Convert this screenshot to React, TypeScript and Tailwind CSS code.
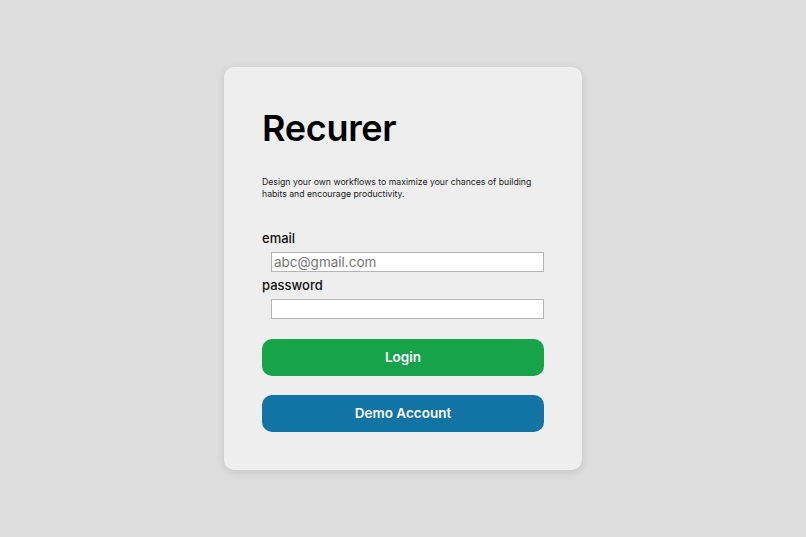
import React, { useState } from "react";

export default function App() {
  const [email, setEmail] = useState("");
  const [password, setPassword] = useState("");

  return (
    <div className="min-h-screen w-full bg-[#dedede] flex items-center justify-center font-['Inter',sans-serif]">
      {/* Login card */}
      <div className="w-[358px] h-[403px] bg-[#eeeeee] rounded-[10px] shadow-[0_2px_8px_rgba(0,0,0,0.12)] px-[38px] pt-[41px] flex flex-col">
        <h1 className="text-[36px] leading-[40px] font-semibold text-black tracking-[-0.3px]">
          Recurer
        </h1>

        <p className="mt-[28px] text-[8.7px] leading-[12px] text-[#222]">
          Design your own workflows to maximize your chances of building
          habits and encourage productivity.
        </p>

        <form className="mt-[28px] flex flex-col" onSubmit={(e) => e.preventDefault()}>
          <label className="text-[13px] leading-[20px] text-[#111] font-medium">email</label>
          <input
            type="email"
            placeholder="abc@gmail.com"
            value={email}
            onChange={(e) => setEmail(e.target.value)}
            className="mt-[4px] ml-[9px] w-[273px] h-[20px] bg-white border border-[#b5b5b5] px-[2px] text-[13.5px] leading-[18px] placeholder:text-[#777] outline-none"
          />

          <label className="mt-[3px] text-[13px] leading-[20px] text-[#111] font-medium">password</label>
          <input
            type="password"
            value={password}
            onChange={(e) => setPassword(e.target.value)}
            className="mt-[4px] ml-[9px] w-[273px] h-[20px] bg-white border border-[#b5b5b5] px-[2px] text-[13.5px] leading-[18px] outline-none"
          />

          <button
            type="submit"
            className="mt-[20px] h-[37px] w-full rounded-[10px] bg-[#16a34a] text-white text-[13.5px] font-semibold"
          >
            Login
          </button>

          <button
            type="button"
            className="mt-[19px] h-[37px] w-full rounded-[10px] bg-[#1174a5] text-white text-[13.5px] font-semibold"
          >
            Demo Account
          </button>
        </form>
      </div>
    </div>
  );
}
